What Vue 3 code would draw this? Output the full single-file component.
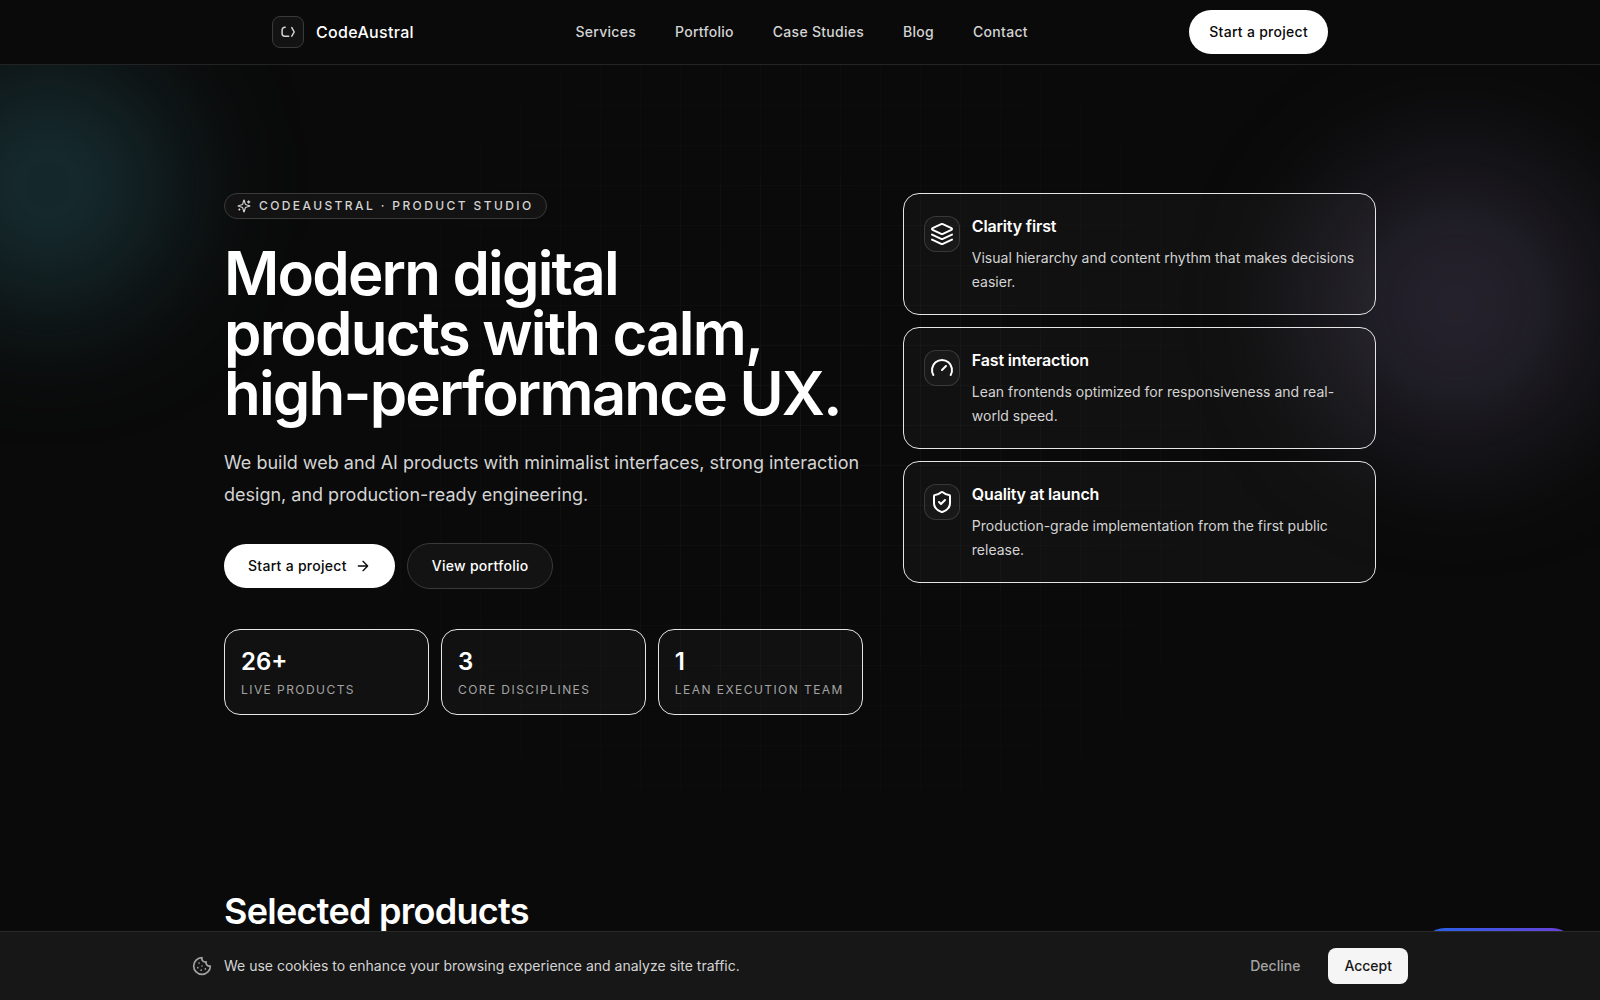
<template>
  <div class="page">
    <header class="site-header">
      <div class="header-inner">
        <a class="brand" href="#">
          <span class="brand-mark">
            <svg viewBox="0 0 16 16" width="16" height="16">
              <path d="M5.2 3.2A3 3 0 0 0 2.1 6v3.6a2.6 2.6 0 0 0 2.6 2.6h4" />
              <path d="M11.8 3.6 14.2 8l-2.4 4.2" />
            </svg>
          </span>
          <span class="brand-name">CodeAustral</span>
        </a>
        <nav class="nav">
          <a v-for="link in navLinks" :key="link" href="#">{{ link }}</a>
        </nav>
        <button class="btn btn-light btn-small">Start a project</button>
      </div>
    </header>

    <main>
      <section class="hero">
        <div class="hero-grid"></div>
        <div class="glow glow-teal"></div>
        <div class="glow glow-violet"></div>

        <div class="hero-inner">
          <div class="hero-copy">
            <div class="eyebrow">
              <svg class="icon" viewBox="0 0 24 24" width="14" height="14">
                <path
                  d="M9.937 15.5A2 2 0 0 0 8.5 14.063l-6.135-1.582a.5.5 0 0 1 0-.962L8.5 9.936A2 2 0 0 0 9.937 8.5l1.582-6.135a.5.5 0 0 1 .963 0L14.063 8.5A2 2 0 0 0 15.5 9.937l6.135 1.581a.5.5 0 0 1 0 .964L15.5 14.063a2 2 0 0 0-1.437 1.437l-1.582 6.135a.5.5 0 0 1-.963 0z"
                />
                <path d="M20 3v4M22 5h-4M4 17v2M5 18H3" />
              </svg>
              <span>CodeAustral · Product Studio</span>
            </div>

            <h1>Modern digital products with calm, high-performance UX.</h1>
            <p class="lead">
              We build web and AI products with minimalist interfaces, strong
              interaction design, and production-ready engineering.
            </p>

            <div class="actions">
              <button class="btn btn-light">
                Start a project
                <svg class="icon" viewBox="0 0 24 24" width="16" height="16">
                  <path d="M5 12h14M12 5l7 7-7 7" />
                </svg>
              </button>
              <button class="btn btn-outline">View portfolio</button>
            </div>

            <div class="stats">
              <div v-for="stat in stats" :key="stat.label" class="stat">
                <p class="stat-value">{{ stat.value }}</p>
                <p class="stat-label">{{ stat.label }}</p>
              </div>
            </div>
          </div>

          <div class="features">
            <article v-for="f in features" :key="f.title" class="feature">
              <span class="feature-icon">
                <svg class="icon" viewBox="0 0 24 24" width="24" height="24">
                  <path v-for="d in f.paths" :key="d" :d="d" />
                </svg>
              </span>
              <div>
                <h2 class="feature-title">{{ f.title }}</h2>
                <p class="feature-text">{{ f.text }}</p>
              </div>
            </article>
          </div>
        </div>
      </section>

      <section class="products">
        <h2 class="products-title">Selected products</h2>
      </section>
    </main>

    <button class="chat-button" aria-label="Open chat"></button>

    <div v-if="showCookies" class="cookies">
      <div class="cookies-inner">
        <svg class="icon cookie-icon" viewBox="0 0 24 24" width="20" height="20">
          <path d="M12 2a10 10 0 1 0 10 10 4 4 0 0 1-5-5 4 4 0 0 1-5-5" />
          <path d="M8.5 8.5v.01M16 15.5v.01M12 12v.01M11 17v.01M7 14v.01" />
        </svg>
        <p>We use cookies to enhance your browsing experience and analyze site traffic.</p>
        <button class="cookie-btn decline" @click="closeCookies">Decline</button>
        <button class="cookie-btn accept" @click="closeCookies">Accept</button>
      </div>
    </div>
  </div>
</template>

<script setup>
import { ref } from "vue";

const navLinks = ["Services", "Portfolio", "Case Studies", "Blog", "Contact"];

const stats = [
  { value: "26+", label: "Live products" },
  { value: "3", label: "Core disciplines" },
  { value: "1", label: "Lean execution team" },
];

const features = [
  {
    title: "Clarity first",
    text: "Visual hierarchy and content rhythm that makes decisions easier.",
    paths: [
      "M12.83 2.18a2 2 0 0 0-1.66 0L2.6 6.08a1 1 0 0 0 0 1.83l8.58 3.91a2 2 0 0 0 1.66 0l8.58-3.9a1 1 0 0 0 0-1.83z",
      "m22 12.65-9.17 4.16a2 2 0 0 1-1.66 0L2 12.65",
      "m22 17.65-9.17 4.16a2 2 0 0 1-1.66 0L2 17.65",
    ],
  },
  {
    title: "Fast interaction",
    text: "Lean frontends optimized for responsiveness and real-world speed.",
    paths: ["m12 14 4-4", "M3.34 19a10 10 0 1 1 17.32 0"],
  },
  {
    title: "Quality at launch",
    text: "Production-grade implementation from the first public release.",
    paths: [
      "M20 13c0 5-3.5 7.5-7.66 8.95a1 1 0 0 1-.67-.01C7.5 20.5 4 18 4 13V6a1 1 0 0 1 1-1c2 0 4.5-1.2 6.24-2.72a1.17 1.17 0 0 1 1.52 0C14.51 3.81 17 5 19 5a1 1 0 0 1 1 1z",
      "m9 12 2 2 4-4",
    ],
  },
];

const showCookies = ref(true);

const closeCookies = () => {
  showCookies.value = false;
};
</script>

<style>
body {
  margin: 0;
  background: #0a0a0a;
}
</style>

<style scoped>
.page {
  background: #0a0a0a;
  color: #ffffff;
  font-family: Inter, "Liberation Sans", sans-serif;
  font-size: 16px;
  line-height: 24px;
}

h1,
h2,
p {
  margin: 0;
}

a {
  color: inherit;
  text-decoration: none;
}

button {
  font-family: inherit;
  cursor: pointer;
  border: none;
}

.icon {
  flex-shrink: 0;
  fill: none;
  stroke: currentColor;
  stroke-width: 2;
  stroke-linecap: round;
  stroke-linejoin: round;
}

/* Header */
.site-header {
  position: sticky;
  top: 0;
  z-index: 10;
  background: #0a0a0a;
  border-bottom: 1px solid #232323;
}

.header-inner {
  display: flex;
  align-items: center;
  justify-content: space-between;
  max-width: 1056px;
  height: 64px;
  margin: 0 auto;
}

.brand {
  display: flex;
  align-items: center;
  gap: 12px;
}

.brand-mark {
  display: flex;
  align-items: center;
  justify-content: center;
  box-sizing: border-box;
  width: 32px;
  height: 32px;
  border: 1px solid #3a3a3a;
  border-radius: 8px;
  background: #131313;
}

.brand-mark svg {
  fill: none;
  stroke: #d4d4d4;
  stroke-width: 1.5;
  stroke-linecap: round;
  stroke-linejoin: round;
}

.brand-name {
  font-weight: 500;
  letter-spacing: 0.02em;
}

.nav {
  display: flex;
  gap: 39px;
  color: #d4d4d4;
  font-size: 14px;
  font-weight: 500;
  letter-spacing: 0.02em;
}

.btn {
  display: inline-flex;
  align-items: center;
  gap: 8px;
  padding: 12px 24px;
  border-radius: 999px;
  font-size: 14px;
  font-weight: 500;
  line-height: 20px;
  letter-spacing: 0.02em;
}

.btn-small {
  padding: 12px 20px;
}

.btn-light {
  background: #ffffff;
  color: #0a0a0a;
}

.btn-outline {
  border: 1px solid #3a3a3a;
  background: #131313;
  color: #ffffff;
}

/* Hero */
.hero {
  position: relative;
  overflow: hidden;
  padding: 128px 48px 80px;
}

.hero-grid {
  position: absolute;
  inset: 0;
  background-image: linear-gradient(to right, rgba(255, 255, 255, 0.04) 1px, transparent 1px),
    linear-gradient(to bottom, rgba(255, 255, 255, 0.03) 1px, transparent 1px);
  background-size: 40px 40px;
  mask-image: radial-gradient(circle at center, #000000, transparent 65%);
}

.glow {
  position: absolute;
  border-radius: 50%;
  filter: blur(64px);
}

.glow-teal {
  top: -8px;
  left: -80px;
  width: 256px;
  height: 256px;
  background: rgba(46, 110, 124, 0.34);
}

.glow-violet {
  top: 96px;
  right: 0;
  width: 288px;
  height: 288px;
  background: rgba(118, 108, 150, 0.25);
}

.hero-inner {
  position: relative;
  display: grid;
  grid-template-columns: 1.35fr 1fr;
  align-items: start;
  gap: 40px;
  max-width: 1152px;
  margin: 0 auto;
}

.eyebrow {
  display: inline-flex;
  align-items: center;
  gap: 8px;
  padding: 4px 12px;
  border: 1px solid #3a3a3a;
  border-radius: 999px;
  background: #131313;
  color: #d4d4d4;
  font-size: 12px;
  font-weight: 500;
  line-height: 16px;
  letter-spacing: 0.2em;
  text-transform: uppercase;
  vertical-align: top;
}

h1 {
  margin-top: 24px;
  font-size: 60px;
  font-weight: 600;
  line-height: 60px;
  letter-spacing: -0.03em;
}

.lead {
  margin-top: 24px;
  color: #d4d4d4;
  font-size: 18px;
  line-height: 32px;
}

.actions {
  display: flex;
  align-items: center;
  gap: 12px;
  margin-top: 32px;
}

.stats {
  display: grid;
  grid-template-columns: repeat(3, 1fr);
  gap: 12px;
  margin-top: 40px;
}

.stat {
  padding: 16px;
  border: 1px solid #e5e5e5;
  border-radius: 16px;
  background: rgba(255, 255, 255, 0.03);
}

.stat-value {
  font-size: 24px;
  font-weight: 600;
  line-height: 32px;
}

.stat-label {
  margin-top: 4px;
  color: #a3a3a3;
  font-size: 12px;
  line-height: 16px;
  letter-spacing: 0.12em;
  text-transform: uppercase;
  white-space: nowrap;
}

.features {
  display: grid;
  gap: 12px;
}

.feature {
  display: flex;
  align-items: flex-start;
  gap: 12px;
  padding: 20px;
  border: 1px solid #e5e5e5;
  border-radius: 16px;
  background: rgba(255, 255, 255, 0.03);
}

.feature-icon {
  display: flex;
  flex-shrink: 0;
  align-items: center;
  justify-content: center;
  box-sizing: border-box;
  width: 36px;
  height: 36px;
  margin-top: 2px;
  border: 1px solid rgba(255, 255, 255, 0.14);
  border-radius: 12px;
  background: rgba(255, 255, 255, 0.03);
}

.feature-title {
  font-size: 16px;
  font-weight: 600;
  line-height: 24px;
  letter-spacing: -0.01em;
}

.feature-text {
  margin-top: 8px;
  color: #d4d4d4;
  font-size: 14px;
  line-height: 24px;
}

/* Selected products */
.products {
  max-width: 1152px;
  margin: 0 auto;
  padding: 96px 48px 69px;
}

.products-title {
  font-size: 36px;
  font-weight: 600;
  line-height: 40px;
  letter-spacing: -0.02em;
}

.chat-button {
  position: fixed;
  right: 24px;
  bottom: 24px;
  width: 155px;
  height: 48px;
  border-radius: 999px;
  background: linear-gradient(to right, #2563eb, #6d3fd6);
}

/* Cookie bar */
.cookies {
  position: fixed;
  right: 0;
  bottom: 0;
  left: 0;
  z-index: 20;
  border-top: 1px solid #2a2a2a;
  background: #171717;
}

.cookies-inner {
  display: flex;
  align-items: center;
  gap: 12px;
  max-width: 1216px;
  margin: 0 auto;
  padding: 16px 32px;
  color: #d4d4d4;
  font-size: 14px;
  line-height: 20px;
}

.cookies-inner p {
  flex: 1;
}

.cookie-icon {
  color: #a3a3a3;
}

.cookie-btn {
  padding: 8px 16px;
  border-radius: 8px;
  font-size: 14px;
  font-weight: 500;
  line-height: 20px;
}

.decline {
  background: transparent;
  color: #a3a3a3;
}

.accept {
  background: #f5f5f5;
  color: #171717;
}
</style>
